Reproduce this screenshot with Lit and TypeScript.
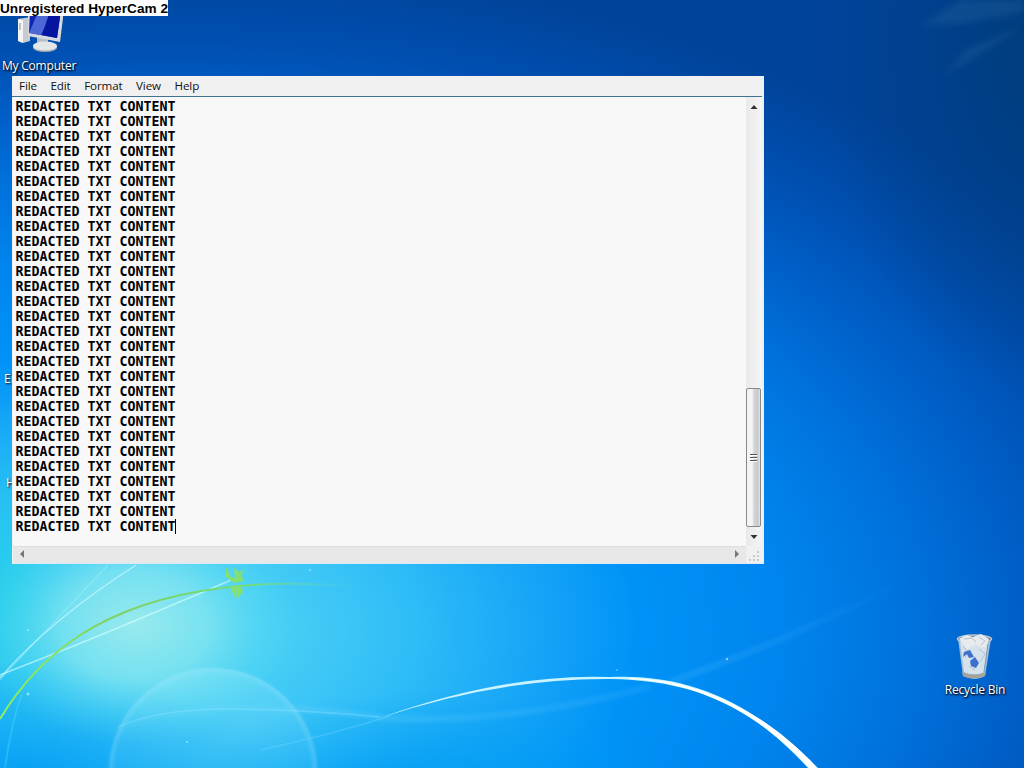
import { LitElement, html, css, svg } from "lit";
import { customElement } from "lit/decorators.js";

const LINE = "REDACTED TXT CONTENT";
const LINES = Array.from({ length: 29 }, () => LINE);
const MENUS = ["File", "Edit", "Format", "View", "Help"];

@customElement("desktop-wallpaper")
class DesktopWallpaper extends LitElement {
  static styles = css`
    :host, svg { display: block; width: 1024px; height: 768px; }
  `;
  render() {
    return html`<svg viewBox="0 0 1024 768">${svg`
      <defs>
        <radialGradient id="sky" gradientUnits="userSpaceOnUse" cx="0" cy="0" r="1" gradientTransform="translate(170 630) scale(1090 670)">
          <stop offset="0" stop-color="#55d5f5"/>
          <stop offset=".1" stop-color="#48cef5"/>
          <stop offset=".22" stop-color="#30bdf7"/>
          <stop offset=".33" stop-color="#18a6f7"/>
          <stop offset=".43" stop-color="#0093f7"/>
          <stop offset=".56" stop-color="#0085ee"/>
          <stop offset=".68" stop-color="#0072dc"/>
          <stop offset=".78" stop-color="#005fc8"/>
          <stop offset=".88" stop-color="#004fb0"/>
          <stop offset="1.0" stop-color="#00439a"/>
        </radialGradient>
        <radialGradient id="glow">
          <stop offset="0" stop-color="#a4eeea" stop-opacity=".85"/>
          <stop offset=".45" stop-color="#88e8f0" stop-opacity=".7"/>
          <stop offset="1" stop-color="#40d8f0" stop-opacity="0"/>
        </radialGradient>
        <radialGradient id="cyan">
          <stop offset="0" stop-color="#20d0e8" stop-opacity=".8"/>
          <stop offset="1" stop-color="#20c8f0" stop-opacity="0"/>
        </radialGradient>
        <radialGradient id="low">
          <stop offset="0" stop-color="#009cf4" stop-opacity=".95"/>
          <stop offset="1" stop-color="#00a0f4" stop-opacity="0"/>
        </radialGradient>
        <radialGradient id="corner">
          <stop offset="0" stop-color="#003c78"/>
          <stop offset="1" stop-color="#003c80" stop-opacity="0"/>
        </radialGradient>
        <linearGradient id="bubble" x1="0" y1="0" x2="0" y2="1">
          <stop offset="0" stop-color="#a0ecf8" stop-opacity=".3"/>
          <stop offset=".5" stop-color="#70dcf8" stop-opacity=".12"/>
        </linearGradient>
        <linearGradient id="green" gradientUnits="userSpaceOnUse" x1="0" y1="0" x2="360" y2="0">
          <stop offset="0" stop-color="#90f060"/>
          <stop offset=".3" stop-color="#80d060"/>
          <stop offset=".7" stop-color="#70dc80"/>
          <stop offset="1" stop-color="#50d0d0" stop-opacity="0"/>
        </linearGradient>
        <linearGradient id="ray" gradientUnits="userSpaceOnUse" x1="680" y1="0" x2="910" y2="0">
          <stop offset="0" stop-color="#50baff" stop-opacity=".22"/>
          <stop offset="1" stop-color="#50baff" stop-opacity="0"/>
        </linearGradient>
        <linearGradient id="haze" gradientUnits="userSpaceOnUse" x1="90" y1="0" x2="650" y2="0">
          <stop offset="0" stop-color="#80dcff" stop-opacity="0"/>
          <stop offset=".4" stop-color="#80dcff" stop-opacity=".2"/>
          <stop offset="1" stop-color="#60c8ff" stop-opacity=".12"/>
        </linearGradient>
        <filter id="soft"><feGaussianBlur stdDeviation="3"/></filter>
        <filter id="tiny" x="-10%" y="-10%" width="120%" height="120%"><feGaussianBlur stdDeviation=".6"/></filter>
        <filter id="mist" x="-10%" y="-30%" width="120%" height="160%"><feGaussianBlur stdDeviation="1.6"/></filter>
      </defs>
      <rect width="1024" height="768" fill="url(#sky)"/>
      <ellipse cx="1060" cy="40" rx="240" ry="360" fill="url(#corner)"/>
      <path d="M1024 0H960L920 26L960 24L1024 12ZM1024 26L944 76L965 50Z" fill="#4080b0" opacity=".2" filter="url(#soft)"/>
      <ellipse cx="10" cy="590" rx="90" ry="190" fill="url(#cyan)"/>
      <ellipse cx="20" cy="790" rx="260" ry="130" fill="url(#low)"/>
      <ellipse cx="430" cy="800" rx="240" ry="110" fill="url(#low)"/>
      <ellipse cx="135" cy="625" rx="165" ry="120" fill="url(#glow)"/>
      <circle cx="213" cy="772" r="104" fill="url(#bubble)"/>
      <circle cx="213" cy="772" r="102" fill="none" stroke="#a0e8ff" stroke-opacity=".2" stroke-width="5" filter="url(#mist)"/>
      <g fill="none">
        <path d="M90 742Q150 708 235 708T385 718Q510 725 650 686" stroke="url(#haze)" stroke-width="7" filter="url(#mist)"/>
        <path d="M118 727Q160 708 235 709T380 717" stroke="#90e4ff" stroke-opacity=".35" stroke-width="1.5" filter="url(#tiny)"/>
        <path d="M670 682C745 655 820 625 910 578" stroke="url(#ray)" stroke-width="7" filter="url(#mist)"/>
        <path d="M0 678Q50 620 136 565" stroke="#d0faff" stroke-opacity=".7" stroke-width="1.3"/>
        <path d="M0 680Q65 610 108 565" stroke="#c0faff" stroke-opacity=".45"/>
        <path d="M0 675Q38 660 66 649T170 606T230 580" stroke="#d8ffff" stroke-opacity=".6" stroke-width="1.6" filter="url(#tiny)"/>
        <path d="M0 719C38 656 100 603 222 588Q280 580 360 587" stroke="url(#green)" stroke-width="2"/>
        <path d="M5 768Q12 720 22 694" stroke="#60ddff" stroke-opacity=".3" stroke-width="2"/>
        <path d="M260 750Q330 735 390 716" stroke="#70d8ff" stroke-opacity=".35" stroke-width="1.5"/>
      </g>
      <path d="M380 718Q505 673 610 677C690 673 755 704 818 768H808C750 704 690 680 610 679Q500 678 380 718Z" fill="#c8f3ff" filter="url(#tiny)"/>
      <path d="M630 678C695 679 765 710 817 768H809C755 708 692 682 630 679Z" fill="#fff"/>
      <path d="M226 567L231 577L235 578L234 568L239 572L246 570L241 574L244 581L234 583L226 577ZM230 587L241 585L243 592L238 598L237 589L236 600Z" fill="#84e070"/>
      <g fill="#b8efff" opacity=".7"><circle cx="310" cy="570" r="1"/><circle cx="28" cy="630" r="1"/><circle cx="28" cy="694" r="1.4"/><circle cx="617" cy="670" r=".8"/><circle cx="727" cy="659" r="1.2"/><circle cx="187" cy="742" r="1"/></g>
    `}</svg>`;
  }
}

@customElement("desktop-icon")
class DesktopIcon extends LitElement {
  static properties = { label: {}, kind: {} };
  declare label: string;
  declare kind: string;
  static styles = css`
    :host { display: flex; flex-direction: column; align-items: center; }
    svg { display: block; width: 48px; height: 48px; }
    .label { font: 12px/16px "Open Sans", "Noto Sans", sans-serif; letter-spacing: -0.2px; color: #fff; white-space: nowrap; text-shadow: 1px 1px 2px #000, 0 1px 2px #001c50; }
  `;
  render() {
    const art = this.kind === "computer"
      ? svg`
        <path d="M3 9L15 7V31L8 33L3 31Z" fill="#c6cbd2"/>
        <path d="M3 9L8 10V33L3 31Z" fill="#f4f4f6"/>
        <path d="M5 13V20" stroke="#8a929c"/>
        <path d="M22 27H33V35H22Z" fill="#b9bec6"/>
        <ellipse cx="30" cy="37.5" rx="12" ry="4.5" fill="#a7adb5"/>
        <ellipse cx="30" cy="36" rx="12" ry="4.5" fill="#e4e6e8"/>
        <path d="M13 0H49L45 32L13 26Z" fill="#d6dade"/>
        <path d="M15 0H46L42 28L14 23Z" fill="#1024b4"/>
        <path d="M24 0H38L26 25L14 23Z" fill="#6f8ce8" opacity=".65"/>
        <path d="M34 4L46 0L42 28L27 25Z" fill="#0615a0"/>`
      : svg`
        <path d="M7 5L12 42Q24 48 34 42L40 5Z" fill="#9fbdd6"/>
        <path d="M9 8L13 38Q24 43 33 38L37 8Z" fill="#d5e2eb"/>
        <ellipse cx="23.5" cy="5" rx="17" ry="4" fill="#707e88" stroke="#b9c9d3" stroke-width="1.5"/>
        <path d="M8 5L15 1L22 3L30 0L38 5L34 14L24 11L16 15Z" fill="#e7ebee"/>
        <path d="M13 5L21 4L25 8M28 3L34 7L30 11M12 13L18 18L14 24M28 15L34 20L29 28M18 32L24 36" fill="none" stroke="#b2c2ce"/>
        <path d="M13 18L19 16L23 23L18 24L16 20L12 23ZM19 27L24 23L28 29L25 34L20 32Z" fill="#3c70cc"/>
        <path d="M11 38Q24 43 35 38L34 42Q24 47 12 42Z" fill="#a3a49e"/>
        <path d="M37 10L33 38" stroke="#7d9cb8"/>`;
    return html`<svg viewBox="0 0 48 48">${art}</svg><span class="label">${this.label}</span>`;
  }
}

@customElement("notepad-window")
class NotepadWindow extends LitElement {
  static styles = css`
    :host { display: flex; flex-direction: column; box-sizing: border-box; width: 752px; height: 488px; background: #f0f0f0; border-right: 2px solid #e6f1f8; border-bottom: 1px solid #d9eaf6; }
    .menu { display: flex; gap: 13.5px; height: 20px; padding-left: 7px; font: 11.6px/19px "Open Sans", "Noto Sans", sans-serif; letter-spacing: -0.1px; color: #111; border-bottom: 1px solid #3d7294; }
    .body { display: grid; flex: 1; grid-template-columns: 1fr 16px; grid-template-rows: 1fr 17px; min-height: 0; padding-left: 1px; }
    .text { background: #f8f8f8; padding: 2px 0 0 2.5px; overflow: hidden; font: bold 13.29px/15px "DejaVu Sans Mono", monospace; color: #000; }
    .line { height: 15px; white-space: pre; }
    .caret { display: inline-block; width: 1px; height: 15px; background: #000; vertical-align: top; }
    .vbar { display: flex; flex-direction: column; align-items: flex-start; background: linear-gradient(90deg, #eaeaea, #f5f5f5); }
    .vbar svg, .hbar svg { display: block; width: 16px; height: 16px; flex: none; }
    .vbar svg { height: 19px; }
    .track { flex: 1; }
    .thumb { display: flex; flex-direction: column; gap: 1px; align-items: center; justify-content: center; box-sizing: border-box; width: 15px; height: 139px; border: 1px solid #888; border-radius: 2px; background: linear-gradient(90deg, #f4f4f4 0 40%, #d2d3d8 55%, #c9c9cc 85%, #e8e8e8); }
    .grip { width: 7px; height: 2px; background: #555; border-bottom: 1px solid #fff; box-sizing: border-box; }
    .hbar { display: flex; align-items: center; justify-content: space-between; background: #e8e8e8; border-top: 1px solid #dedede; box-sizing: border-box; padding-bottom: 2px; }
    .corner svg { display: block; width: 17px; height: 17px; }
  `;
  render() {
    return html`
      <div class="menu">${MENUS.map((m) => html`<span>${m}</span>`)}</div>
      <div class="body">
        <div class="text">${LINES.map((line, i) => html`<div class="line">${line}${i === LINES.length - 1 ? html`<span class="caret"></span>` : ""}</div>`)}</div>
        <div class="vbar">
          <svg viewBox="0 0 16 19"><path d="M4.5 12L8 8L11.5 12Z" fill="#333"/></svg>
          <div class="track"></div>
          <div class="thumb"><i class="grip"></i><i class="grip"></i><i class="grip"></i></div>
          <svg viewBox="0 0 16 19"><path d="M4.5 8L8 12L11.5 8Z" fill="#333"/></svg>
        </div>
        <div class="hbar">
          <svg viewBox="0 0 16 16"><path d="M11 4V12L7 8Z" fill="#777"/></svg>
          <svg viewBox="0 0 16 16"><path d="M5 4V12L9 8Z" fill="#777"/></svg>
        </div>
        <div class="corner"><svg viewBox="0 0 17 17"><path d="M11 5h2v2h-2zM7 9h2v2h-2zM11 9h2v2h-2zM3 13h2v2h-2zM7 13h2v2h-2zM11 13h2v2h-2z" fill="#cacaca"/></svg></div>
      </div>`;
  }
}

@customElement("app-root")
class AppRoot extends LitElement {
  static styles = css`
    :host { display: block; position: relative; width: 1024px; height: 768px; overflow: hidden; }
    .computer, .recycle, .hidden-a, .hidden-b, .window, .watermark { position: absolute; }
    .computer { left: 2px; top: 10px; width: 74px; }
    .recycle { left: 944px; top: 634px; width: 62px; }
    .hidden-a, .hidden-b { font: 12px/15px "Open Sans", sans-serif; color: #fff; text-shadow: 1px 1px 2px #000; }
    .hidden-a { left: 4px; top: 371px; }
    .hidden-b { left: 6px; top: 475px; }
    .window { left: 12px; top: 76px; }
    .watermark { left: 0; top: 0; width: 168px; height: 16px; background: #fff; color: #000; white-space: nowrap; }
    .watermark svg { display: block; }
    .watermark text { font: bold 13.6px "Liberation Sans", Arial, sans-serif; }
  `;
  render() {
    return html`
      <desktop-wallpaper></desktop-wallpaper>
      <desktop-icon class="computer" kind="computer" label="My Computer"></desktop-icon>
      <desktop-icon class="recycle" kind="bin" label="Recycle Bin"></desktop-icon>
      <span class="hidden-a">En</span>
      <span class="hidden-b">H</span>
      <notepad-window class="window"></notepad-window>
      <div class="watermark"><svg width="168" height="16"><text x="0" y="13" textLength="168" lengthAdjust="spacing">Unregistered HyperCam 2</text></svg></div>`;
  }
}
